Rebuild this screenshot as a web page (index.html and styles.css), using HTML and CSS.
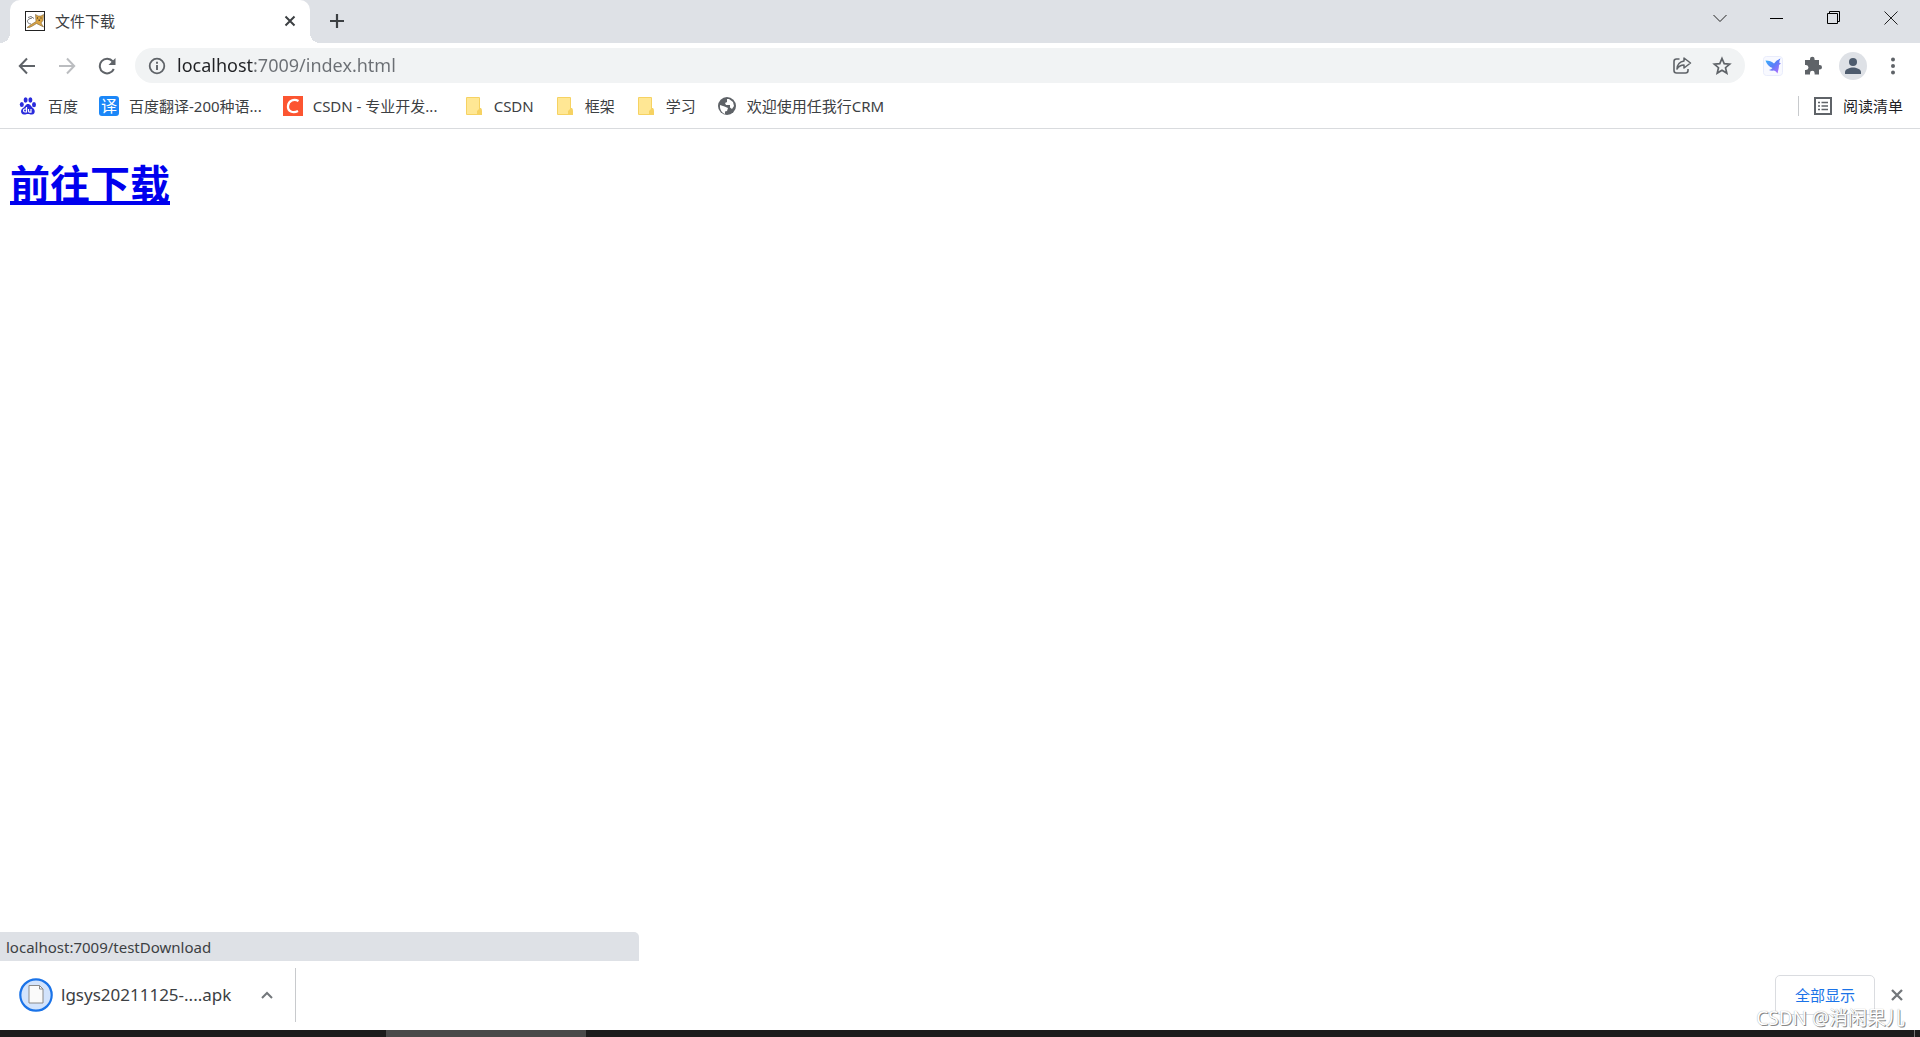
FILE: index.html
```html
<!DOCTYPE html>
<html lang="zh-CN">
<head>
<meta charset="utf-8">
<title>文件下载</title>
<link rel="stylesheet" href="styles.css">
</head>
<body>
<header class="browser">
  <div class="tabstrip">
    <div class="tab">
      <svg class="icon" width="20" height="20" viewBox="0 0 20 20"><rect x=".5" y=".5" width="19" height="19" fill="#fff" stroke="#222"/><path d="M6 13C2 12.500 1.500 9.500 4 8l3-1M3 6.500l3-1 3 2" fill="none" stroke="#555" stroke-width=".8"/><path d="M2 16.500l5-3.500 4-2.500-.5-7 2.500 1.500h3l2.500-1.500-.5 6-2 2.500 2.500 4-4-2-3-1.500-4 2.500-3 1.500z" fill="#d9a445" stroke="#6b5127" stroke-width=".5"/><path d="M12 7h1M15.500 7h1M13.500 9.200h1.500" stroke="#222"/></svg>
      <span class="tab-title">文件下载</span>
      <button class="plain small" aria-label="关闭标签页"><svg width="12" height="12" viewBox="0 0 12 12"><path d="M1.500 1.500l9 9M10.500 1.500l-9 9" stroke="#3c4043" stroke-width="2"/></svg></button>
    </div>
    <button class="plain new-tab" aria-label="新标签页"><svg width="16" height="16" viewBox="0 0 16 16"><path d="M8 1v14M1 8h14" stroke="#3c4043" stroke-width="2.200"/></svg></button>
    <div class="window-controls">
      <button class="plain win" aria-label="搜索标签页"><svg width="14" height="14" viewBox="0 0 14 14"><path d="M.5 4L7 10.500 13.500 4" fill="none" stroke="#222"/></svg></button>
      <button class="plain win" aria-label="最小化"><svg width="14" height="14" viewBox="0 0 14 14"><path d="M0 7.500h13" stroke="#000"/></svg></button>
      <button class="plain win" aria-label="还原"><svg width="14" height="14" viewBox="0 0 14 14"><path d="M.5 2.500h10v10H.5zM2.500 2.500v-2h10v10h-2" fill="none" stroke="#000"/></svg></button>
      <button class="plain win" aria-label="关闭"><svg width="14" height="14" viewBox="0 0 14 14"><path d="M.5.5l13 13M13.500.5l-13 13" stroke="#222"/></svg></button>
    </div>
  </div>

  <div class="toolbar">
    <div class="nav">
      <button class="plain tool" aria-label="后退"><svg width="18" height="18" viewBox="0 0 18 18"><path d="M17 9H2M9 1.500L1.800 9 9 16.500" fill="none" stroke="#5f6368" stroke-width="2"/></svg></button>
      <button class="plain tool" aria-label="前进"><svg width="18" height="18" viewBox="0 0 18 18"><path d="M1 9h15M9 1.500L16.200 9 9 16.500" fill="none" stroke="#bbbdc0" stroke-width="2"/></svg></button>
      <button class="plain tool" aria-label="重新加载"><svg width="18" height="18" viewBox="0 0 18 18"><path d="M15.800 12A7.300 7.300 0 1 1 14.800 4.500" fill="none" stroke="#5f6368" stroke-width="2"/><path d="M17.500 1v7h-7z" fill="#5f6368"/></svg></button>
    </div>
    <form class="omnibox">
      <button type="button" class="plain small" aria-label="网站信息"><svg width="18" height="18" viewBox="0 0 18 18"><circle cx="9" cy="9" r="7.300" fill="none" stroke="#5f6368" stroke-width="1.800"/><path d="M9 8v5M9 4.800v1.900" stroke="#5f6368" stroke-width="1.900"/></svg></button>
      <input class="url" type="text" aria-label="地址" value="localhost:7009/index.html">
      <button type="button" class="plain tool" aria-label="分享"><svg width="20" height="20" viewBox="0 0 20 20"><path d="M7.500 3H4.500Q2 3 2 5.500v9Q2 17 4.500 17h9q2.500 0 2.500-2.500V13" fill="none" stroke="#5f6368" stroke-width="1.600"/><path d="M12 5V2l6.500 5-6.500 5V9Q7.500 9 5 13 5.500 6 12 5z" fill="none" stroke="#5f6368" stroke-width="1.500" stroke-linejoin="round"/></svg></button>
      <button type="button" class="plain tool" aria-label="添加书签"><svg width="20" height="20" viewBox="0 0 20 20"><path d="M10 2.500l2.200 5.100 5.500.5-4.200 3.600 1.300 5.400-4.800-2.900-4.800 2.900 1.300-5.400-4.200-3.600 5.500-.5z" fill="none" stroke="#5f6368" stroke-width="1.700"/></svg></button>
    </form>
    <div class="extensions">
      <button class="plain tool" aria-label="扩展"><svg width="20" height="20" viewBox="0 0 20 20"><defs><linearGradient id="bird" x1="0" y1="0" x2="1" y2="1"><stop offset="0" stop-color="#31b6fa"/><stop offset=".5" stop-color="#5c7df8"/><stop offset="1" stop-color="#c668ff"/></linearGradient></defs><rect x=".5" y=".5" width="19" height="19" rx="3" fill="#f8f9ff" stroke="#e9ecfb"/><path d="M2.500 4.500Q8 4.500 11 7.500 13 4 17.500 2.500 16 5 16.500 7l1.500.5-2 1.500c0 3.500-1 5.500-1.500 8.500Q13 15 11 14.500q-3 .5-5-.5 2.500-.5 3.500-2Q4.500 10.500 2.500 4.500z" fill="url(#bird)"/></svg></button>
      <button class="plain tool" aria-label="扩展程序"><svg width="20" height="20" viewBox="0 0 20 20"><path d="M2 4h5V3a2.300 2.300 0 0 1 4.600 0v1H16v5h.700a2.300 2.300 0 0 1 0 4.600H16v5h-4.400V17a2.300 2.300 0 0 0-4.600 0v1.600H2V14h1a2.300 2.300 0 0 0 0-5H2z" fill="#5f6368"/></svg></button>
      <button class="plain tool" aria-label="用户"><svg width="28" height="28" viewBox="0 0 28 28"><circle cx="14" cy="14" r="14" fill="#dee1e6"/><circle cx="14" cy="10" r="4" fill="#4d5b6d"/><path d="M6 22v-2c0-3 5-4.500 8-4.500s8 1.500 8 4.500v2z" fill="#4d5b6d"/></svg></button>
      <button class="plain tool" aria-label="菜单"><svg width="4" height="18" viewBox="0 0 4 18"><g fill="#5f6368"><circle cx="2" cy="2.500" r="2"/><circle cx="2" cy="9" r="2"/><circle cx="2" cy="15.500" r="2"/></g></svg></button>
    </div>
  </div>

  <nav class="bookmarks">
    <a href="#"><svg width="20" height="20" viewBox="0 0 20 20"><g fill="#2a2bdc"><ellipse cx="3.800" cy="8.500" rx="2" ry="2.600"/><ellipse cx="7.600" cy="4" rx="2" ry="2.700"/><ellipse cx="12.400" cy="4" rx="2" ry="2.700"/><ellipse cx="16" cy="8.700" rx="2" ry="2.600"/><path d="M10 8c2.500 0 3 2.500 5 4s3 6-1 6.500c-2 .2-2-.5-4-.5s-2 .700-4 .5c-4-.5-3.500-5-1-6.500S7.500 8 10 8z"/></g><path d="M8.500 11v5H7a1.500 1.500 0 0 1 0-3h1.500M10.500 13v2q0 1.200 1.200 1.200H13V13" fill="none" stroke="#fff" stroke-width="1.200"/></svg>百度</a>
    <a class="long" href="#"><span class="badge translate">译</span>百度翻译-200种语...</a>
    <a class="long" href="#"><svg width="20" height="20" viewBox="0 0 20 20"><path d="M0 0h20v20H0z" fill="#fc5531"/><path d="M15.500 5C11 2.500 5.500 4.500 5 10c-.5 5.500 5 7.500 10 5" fill="none" stroke="#fff" stroke-width="2.300"/></svg>CSDN - 专业开发...</a>
    <a href="#"><svg width="20" height="20" viewBox="0 0 20 20"><path d="M3 1h12q1 0 1 1v10h1q1 1 1 3v4H3q-1 0-1-1V2q0-1 1-1z" fill="#f6d262"/><path d="M3 2h12v11l-2 2v3H3z" fill="#ffe794"/></svg>CSDN</a>
    <a href="#"><svg width="20" height="20" viewBox="0 0 20 20"><path d="M3 1h12q1 0 1 1v10h1q1 1 1 3v4H3q-1 0-1-1V2q0-1 1-1z" fill="#f6d262"/><path d="M3 2h12v11l-2 2v3H3z" fill="#ffe794"/></svg>框架</a>
    <a href="#"><svg width="20" height="20" viewBox="0 0 20 20"><path d="M3 1h12q1 0 1 1v10h1q1 1 1 3v4H3q-1 0-1-1V2q0-1 1-1z" fill="#f6d262"/><path d="M3 2h12v11l-2 2v3H3z" fill="#ffe794"/></svg>学习</a>
    <a href="#"><svg width="20" height="20" viewBox="0 0 20 20"><circle cx="10" cy="10" r="9" fill="#5f6368"/><path d="M3 9l4.500 1.500L11 12l-1 3-2 .5V18C5 17 2.500 13.500 3 9zM10 3h2l4 3 1 4-2 3-2-1.500V9h-4L8 7l2-1z" fill="#fff"/></svg>欢迎使用任我行CRM</a>
    <button class="plain reading"><svg width="20" height="20" viewBox="0 0 20 20"><path d="M2 2h16v16H2z" fill="none" stroke="#5f6368" stroke-width="2"/><path d="M5 6.500h2M5 10h2M5 13.500h2M8.500 6.500H15M8.500 10H15M8.500 13.500H15" stroke="#5f6368" stroke-width="1.500"/></svg>阅读清单</button>
  </nav>
</header>

<main class="page">
  <h1><a href="testDownload">前往下载</a></h1>
  <div class="status">localhost:7009/testDownload</div>
</main>

<footer class="shelf">
  <div class="download">
    <svg width="34" height="34" viewBox="0 0 34 34"><circle cx="17" cy="17" r="15.700" fill="#d2e3fc" stroke="#1a73e8" stroke-width="2.200"/><path d="M10 7.500h10.500L24 11v14H10z" fill="#fafafa" stroke="#8a8a8a"/><path d="M20.500 7.500V11H24" fill="none" stroke="#8a8a8a"/></svg>
    <span class="file">lgsys20211125-....apk</span>
    <button class="plain small" aria-label="更多选项"><svg width="12" height="8" viewBox="0 0 12 8"><path d="M1 7l5-5 5 5" fill="none" stroke="#73777b" stroke-width="2"/></svg></button>
  </div>
  <button class="show-all">全部显示</button>
  <button class="plain small" aria-label="关闭下载栏"><svg width="12" height="12" viewBox="0 0 12 12"><path d="M1 1l10 10M11 1L1 11" stroke="#73777b" stroke-width="2.300"/></svg></button>
  <span class="watermark">CSDN @消闲果儿</span>
</footer>
<div class="taskbar"><span class="task-active"></span><span class="desktop-edge"></span></div>
</body>
</html>
```
FILE: styles.css
```css
* { box-sizing: border-box; }

body {
  margin: 0;
  min-height: 100vh;
  display: flex;
  flex-direction: column;
  background: #fff;
  color: #3c4043;
  font: 15px/20px "Noto Sans", "Noto Sans CJK SC", sans-serif;
}

svg { display: block; flex: none; }

.plain {
  display: flex;
  align-items: center;
  justify-content: center;
  padding: 0;
  border: 0;
  background: none;
  color: inherit;
  font: inherit;
}
.small { width: 20px; height: 20px; }
.tool { width: 40px; height: 36px; }

/* Tab strip */
.tabstrip {
  display: flex;
  height: 43px;
  padding: 0 1px 0 10px;
  background: #dee1e6;
}
.tab {
  position: relative;
  display: flex;
  align-items: center;
  gap: 10px;
  width: 300px;
  padding: 0 10px 1px 15px;
  border-radius: 10px 10px 0 0;
  background: #fff;
}
.tab::before,
.tab::after {
  content: "";
  position: absolute;
  bottom: 0;
  width: 10px;
  height: 10px;
}
.tab::before { right: 100%; background: radial-gradient(circle at 0 0, transparent 10px, #fff 10px); }
.tab::after { left: 100%; background: radial-gradient(circle at 100% 0, transparent 10px, #fff 10px); }
.tab-title { flex: 1; }
.new-tab { width: 54px; height: 42px; }
.window-controls { display: flex; margin-left: auto; }
.win { width: 57px; height: 36px; }

/* Toolbar */
.toolbar {
  display: flex;
  align-items: center;
  height: 45px;
  padding: 0 7px;
}
.nav { display: flex; margin-right: 8px; }
.omnibox {
  flex: 1;
  display: flex;
  align-items: center;
  height: 35px;
  padding: 0 3px 0 12px;
  border-radius: 18px;
  background: #f1f3f4;
}
.url {
  flex: 1;
  min-width: 0;
  height: 28px;
  margin-left: 10px;
  padding: 0 0 2px;
  border: 0;
  outline: 0;
  background: linear-gradient(90deg, #202124 76px, #6b6f74 76px);
  background-clip: text;
  color: transparent;
  font: 18px/26px "Noto Sans", "Noto Sans CJK SC", sans-serif;
}
.extensions { display: flex; margin-left: 8px; }

/* Bookmarks bar */
.bookmarks {
  display: flex;
  align-items: center;
  gap: 21px;
  height: 41px;
  padding: 0 17px 4px 18px;
  border-bottom: 1px solid #d9dbde;
}
.bookmarks a {
  display: flex;
  align-items: center;
  gap: 10px;
  color: inherit;
  text-decoration: none;
  white-space: nowrap;
}
.bookmarks .long { min-width: 160px; }
.badge {
  width: 20px;
  height: 20px;
  border-radius: 3px;
  color: #fff;
  font-size: 16px;
  text-align: center;
}
.translate { background: #1b87f8; }
.reading {
  gap: 10px;
  margin-left: auto;
  padding-left: 14px;
  border-left: 1px solid #c8cacd;
  color: #202124;
}

/* Page */
.page {
  position: relative;
  flex: 1;
  padding: 28px 10px;
}
h1 {
  margin: 0;
  font-size: 40px;
  line-height: 54px;
}
h1 a {
  color: #00e;
  text-decoration-thickness: 4px;
  text-underline-offset: 2px;
  text-decoration-skip-ink: none;
}
.status {
  position: absolute;
  left: 0;
  bottom: 0;
  width: 33.3%;
  padding: 5px 6px 4px;
  border-radius: 0 5px 0 0;
  background: #dee1e6;
}

/* Download shelf */
.shelf {
  position: relative;
  display: flex;
  align-items: center;
  gap: 12px;
  height: 69px;
  padding: 0 13px 2px 19px;
}
.download {
  display: flex;
  align-items: center;
  gap: 8px;
  width: 277px;
  height: 54px;
  margin-right: auto;
  padding-right: 18px;
  border-right: 1px solid #c8cacd;
}
.file { flex: 1; font-size: 17px; }
.show-all {
  width: 100px;
  height: 40px;
  padding: 0;
  border: 1px solid #dadce0;
  border-radius: 5px;
  background: #fff;
  color: #1a73e8;
  font: inherit;
}
.watermark {
  position: absolute;
  right: 15px;
  bottom: 0;
  color: #fff;
  font-size: 19px;
  line-height: 24px;
  text-shadow: 1px 1px 0 #888, 0 0 1px #999;
}

/* Taskbar edge */
.taskbar {
  display: flex;
  height: 7px;
  padding: 0 5px 0 386px;
  background: #1c1c1c;
}
.task-active { width: 200px; background: #4a4a4a; }
.desktop-edge { width: 1px; margin-left: auto; background: #777; }
```
